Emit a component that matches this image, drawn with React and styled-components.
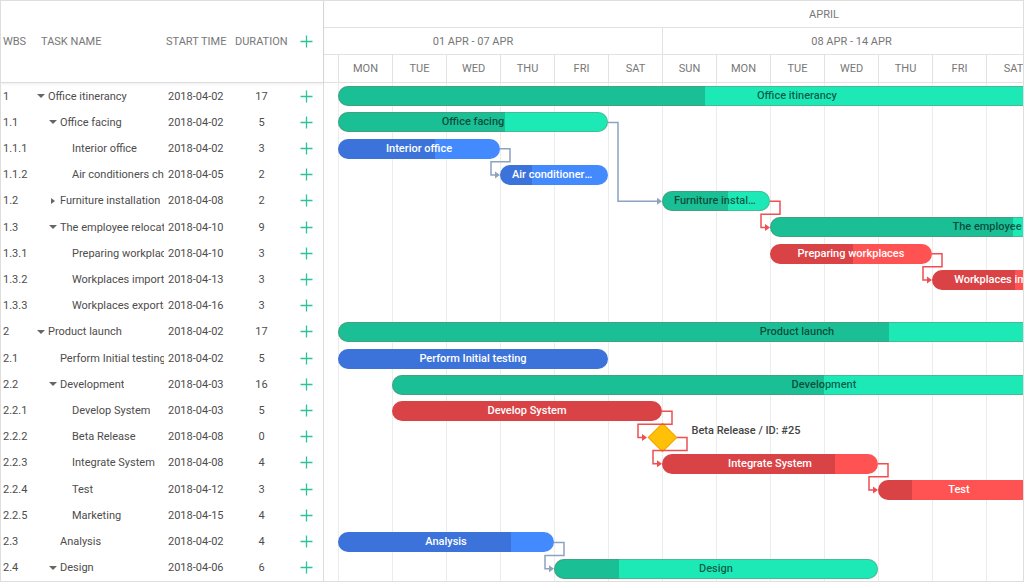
import React from 'react'
import styled, { createGlobalStyle } from 'styled-components'

const DAY = 54
const ROW = 26.25
const SHIFT = 40

const palette = {
  green: { dark: '#1abf95', light: '#1de9b6', text: 'rgba(0, 0, 0, 0.62)' },
  blue: { dark: '#3b73da', light: '#448aff', text: '#ffffff' },
  red: { dark: '#d94346', light: '#ff5252', text: '#ffffff' },
}

const tasks = [
  { wbs: '1', name: 'Office itinerancy', start: '2018-04-02', dur: 17, level: 0, tree: 'open', color: 'green', p: 40, parent: true },
  { wbs: '1.1', name: 'Office facing', start: '2018-04-02', dur: 5, level: 1, tree: 'open', color: 'green', p: 62, parent: true },
  { wbs: '1.1.1', name: 'Interior office', start: '2018-04-02', dur: 3, level: 2, color: 'blue', p: 60 },
  { wbs: '1.1.2', name: 'Air conditioners check', start: '2018-04-05', dur: 2, level: 2, color: 'blue', p: 30 },
  { wbs: '1.2', name: 'Furniture installation', start: '2018-04-08', dur: 2, level: 1, tree: 'closed', color: 'green', p: 61, parent: true },
  { wbs: '1.3', name: 'The employee relocation', start: '2018-04-10', dur: 9, level: 1, tree: 'open', color: 'green', p: 50, parent: true },
  { wbs: '1.3.1', name: 'Preparing workplaces', start: '2018-04-10', dur: 3, level: 2, color: 'red', p: 51 },
  { wbs: '1.3.2', name: 'Workplaces importation', start: '2018-04-13', dur: 3, level: 2, color: 'red', p: 51 },
  { wbs: '1.3.3', name: 'Workplaces exportation', start: '2018-04-16', dur: 3, level: 2, color: 'red', p: 50 },
  { wbs: '2', name: 'Product launch', start: '2018-04-02', dur: 17, level: 0, tree: 'open', color: 'green', p: 60, parent: true },
  { wbs: '2.1', name: 'Perform Initial testing', start: '2018-04-02', dur: 5, level: 1, color: 'blue', p: 100 },
  { wbs: '2.2', name: 'Development', start: '2018-04-03', dur: 16, level: 1, tree: 'open', color: 'green', p: 50, parent: true },
  { wbs: '2.2.1', name: 'Develop System', start: '2018-04-03', dur: 5, level: 2, color: 'red', p: 100 },
  { wbs: '2.2.2', name: 'Beta Release', start: '2018-04-08', dur: 0, level: 2, milestone: true },
  { wbs: '2.2.3', name: 'Integrate System', start: '2018-04-08', dur: 4, level: 2, color: 'red', p: 80 },
  { wbs: '2.2.4', name: 'Test', start: '2018-04-12', dur: 3, level: 2, color: 'red', p: 21 },
  { wbs: '2.2.5', name: 'Marketing', start: '2018-04-15', dur: 4, level: 2, color: 'red', p: 30 },
  { wbs: '2.3', name: 'Analysis', start: '2018-04-02', dur: 4, level: 1, color: 'blue', p: 80 },
  { wbs: '2.4', name: 'Design', start: '2018-04-06', dur: 6, level: 1, tree: 'open', color: 'green', p: 20, parent: true },
]

const links = [
  { from: 1, to: 4, color: '#8ea3c0' },
  { from: 2, to: 3, color: '#8ea3c0' },
  { from: 4, to: 5, color: '#ef4f52' },
  { from: 6, to: 7, color: '#ef4f52' },
  { from: 12, to: 13, color: '#ef4f52' },
  { from: 13, to: 14, color: '#ef4f52' },
  { from: 14, to: 15, color: '#ef4f52' },
  { from: 17, to: 18, color: '#8ea3c0' },
]

const weekDays = ['SUN', 'MON', 'TUE', 'WED', 'THU', 'FRI', 'SAT']
const days = Array.from({ length: 21 }, (_, i) => weekDays[i % 7])
const weeks = ['01 APR - 07 APR', '08 APR - 14 APR', '15 APR - 21 APR']

const dayIndex = (s) => parseInt(s.slice(8), 10) - 1
const MILE = 15

function barStart(t) {
  const x = dayIndex(t.start) * DAY
  return t.milestone ? x - MILE : x
}
function barEnd(t) {
  const x = (dayIndex(t.start) + t.dur) * DAY
  return t.milestone ? x + MILE : x
}

function linkPath(x1, y1, x2, y2) {
  if (x2 - x1 >= 20) return `M${x1} ${y1} H${x1 + 10} V${y2} H${x2 - 4}`
  const mid = y1 + ROW / 2
  return `M${x1} ${y1} H${x1 + 10} V${mid} H${x2 - 9} V${y2} H${x2 - 4}`
}

const GlobalStyle = createGlobalStyle`
  html, body { margin: 0; padding: 0; background: #fff; }
  body { font-family: Roboto, "Noto Sans", "Liberation Sans", sans-serif; }
  * { box-sizing: border-box; }
`

const Frame = styled.div`
  width: 1024px;
  height: 582px;
  border: 1px solid #dedede;
  display: flex;
  overflow: hidden;
  background: #fff;
`

const GridPanel = styled.div`
  width: 323px;
  flex: none;
  border-right: 1px solid #dcdcdc;
  display: flex;
  flex-direction: column;
`

const cols = '36px 127px 67px 59px 33px'

const GridHead = styled.div`
  height: 82px;
  flex: none;
  display: grid;
  grid-template-columns: ${cols};
  align-items: center;
  border-bottom: 1px solid #dcdcdc;
  box-shadow: 0 1px 3px rgba(0, 0, 0, 0.08);
  position: relative;
  z-index: 1;
  font-size: 11px;
  color: #777;
  text-transform: uppercase;
`

const HeadCell = styled.div`
  padding-left: ${(p) => p.$pad || 0}px;
  text-align: ${(p) => p.$align || 'left'};
  white-space: nowrap;
`

const GridRow = styled.div`
  height: ${ROW}px;
  display: grid;
  grid-template-columns: ${cols};
  align-items: center;
  font-size: 11px;
  color: #4d4d4d;
`

const Cell = styled.div`
  min-width: 0;
  padding-left: ${(p) => p.$pad || 0}px;
  text-align: ${(p) => p.$align || 'left'};
  white-space: nowrap;
  overflow: hidden;
  text-overflow: clip;
`

const TaskCell = styled.div`
  min-width: 0;
  display: flex;
  align-items: center;
  padding-left: ${(p) => p.$level * 12}px;
  white-space: nowrap;
  overflow: hidden;
`

const TaskText = styled.span`
  min-width: 0;
  overflow: hidden;
  text-overflow: clip;
`

const Toggle = styled.span`
  flex: none;
  width: 11px;
  height: 8px;
  display: flex;
  align-items: center;
  padding-left: ${(p) => (p.$kind === 'closed' ? 2 : 0)}px;

  &::before {
    content: '';
    display: ${(p) => (p.$kind ? 'block' : 'none')};
    width: 0;
    height: 0;
    ${(p) =>
      p.$kind === 'closed'
        ? 'border-top: 3.5px solid transparent; border-bottom: 3.5px solid transparent; border-left: 4.5px solid #666;'
        : 'border-left: 4px solid transparent; border-right: 4px solid transparent; border-top: 4.5px solid #666;'}
  }
`

const AddIcon = ({ size = 13 }) => (
  <svg width={size} height={size} viewBox="0 0 13 13">
    <path d="M6.5 0.5 V12.5 M0.5 6.5 H12.5" stroke="#2cc39c" strokeWidth="1.3" fill="none" />
  </svg>
)

const AddCell = styled.div`
  display: flex;
  justify-content: center;
  align-items: center;
`

const ChartPanel = styled.div`
  flex: 1;
  min-width: 0;
  overflow: hidden;
`

const Timeline = styled.div`
  width: ${21 * DAY}px;
  margin-left: -${SHIFT}px;
  height: 100%;
  display: flex;
  flex-direction: column;
`

const ScaleRow = styled.div`
  height: ${(p) => p.$h}px;
  flex: none;
  display: flex;
  border-bottom: 1px solid #e2e2e2;
  font-size: 11px;
  color: #777;
`

const ScaleCell = styled.div`
  width: ${(p) => p.$w}px;
  flex: none;
  border-left: ${(p) => (p.$line ? '1px solid #e2e2e2' : 'none')};
  display: flex;
  align-items: center;
  justify-content: center;
  white-space: nowrap;
`

const Body = styled.div`
  flex: 1;
  position: relative;
  background-image: repeating-linear-gradient(
    to right,
    #ececec 0 1px,
    transparent 1px ${DAY}px
  );
`

const ChartRow = styled.div`
  height: ${ROW}px;
  display: flex;
  align-items: center;
`

const Bar = styled.div`
  flex: none;
  height: 20px;
  border-radius: 10px;
  background: linear-gradient(
    to right,
    ${(p) => palette[p.$color].dark} var(--p),
    ${(p) => palette[p.$color].light} var(--p)
  );
  box-shadow: ${(p) => (p.$parent ? 'inset 0 0 0 1px rgba(140, 110, 80, 0.35)' : 'none')};
  color: ${(p) => palette[p.$color].text};
  font-size: 11px;
  font-weight: 500;
  line-height: 20px;
  text-align: center;
  padding: 0 12px;
  white-space: nowrap;
  overflow: hidden;
  text-overflow: ellipsis;
`

const Diamond = styled.div`
  flex: none;
  width: 21px;
  height: 21px;
  background: #ffc107;
  border: 1px solid #f4a300;
  transform: rotate(45deg);
`

const MileLabel = styled.span`
  align-self: flex-start;
  margin-top: 1px;
  margin-left: 19px;
  font-size: 11px;
  font-weight: 500;
  line-height: 12px;
  color: #444;
  white-space: nowrap;
`

const Links = styled.svg`
  position: absolute;
  left: 0;
  top: 0;
  pointer-events: none;
  overflow: visible;
`

function TaskBar({ t }) {
  if (t.milestone) {
    return (
      <ChartRow>
        <Diamond style={{ marginLeft: dayIndex(t.start) * DAY - 10.5 }} />
        <MileLabel>Beta Release / ID: #25</MileLabel>
      </ChartRow>
    )
  }
  return (
    <ChartRow>
      <Bar
        $color={t.color}
        $parent={t.parent}
        style={{ marginLeft: dayIndex(t.start) * DAY, width: t.dur * DAY, '--p': `${t.p}%` }}
      >
        {t.name}
      </Bar>
    </ChartRow>
  )
}

export default function App() {
  const center = (i) => i * ROW + ROW / 2
  return (
    <Frame>
      <GlobalStyle />
      <GridPanel>
        <GridHead>
          <HeadCell $pad={2}>WBS</HeadCell>
          <HeadCell $pad={4}>Task name</HeadCell>
          <HeadCell $pad={2}>Start time</HeadCell>
          <HeadCell $pad={4}>Duration</HeadCell>
          <AddCell><AddIcon /></AddCell>
        </GridHead>
        {tasks.map((t) => (
          <GridRow key={t.wbs}>
            <Cell $pad={2}>{t.wbs}</Cell>
            <TaskCell $level={t.level}>
              <Toggle $kind={t.tree} />
              <TaskText>{t.name}</TaskText>
            </TaskCell>
            <Cell $pad={4}>{t.start}</Cell>
            <Cell $align="center" $pad={2}>{t.dur}</Cell>
            <AddCell><AddIcon /></AddCell>
          </GridRow>
        ))}
      </GridPanel>

      <ChartPanel>
        <Timeline>
          <ScaleRow $h={27}>
            <ScaleCell $w={20 * DAY}>APRIL</ScaleCell>
          </ScaleRow>
          <ScaleRow $h={27}>
            {weeks.map((w, i) => (
              <ScaleCell key={w} $w={7 * DAY} $line={i > 0}>{w}</ScaleCell>
            ))}
          </ScaleRow>
          <ScaleRow $h={28}>
            {days.map((d, i) => (
              <ScaleCell key={i} $w={DAY} $line>{d}</ScaleCell>
            ))}
          </ScaleRow>
          <Body>
            {tasks.map((t) => (
              <TaskBar key={t.wbs} t={t} />
            ))}
            <Links width={21 * DAY} height={tasks.length * ROW}>
              {links.map((l, i) => {
                const a = tasks[l.from]
                const b = tasks[l.to]
                const x1 = barEnd(a)
                const y1 = center(l.from)
                const x2 = barStart(b)
                const y2 = center(l.to)
                return (
                  <g key={i}>
                    <path d={linkPath(x1, y1, x2, y2)} stroke={l.color} strokeWidth="1.5" fill="none" />
                    <path d={`M${x2} ${y2} L${x2 - 5} ${y2 - 3.5} L${x2 - 5} ${y2 + 3.5} Z`} fill={l.color} />
                  </g>
                )
              })}
            </Links>
          </Body>
        </Timeline>
      </ChartPanel>
    </Frame>
  )
}
